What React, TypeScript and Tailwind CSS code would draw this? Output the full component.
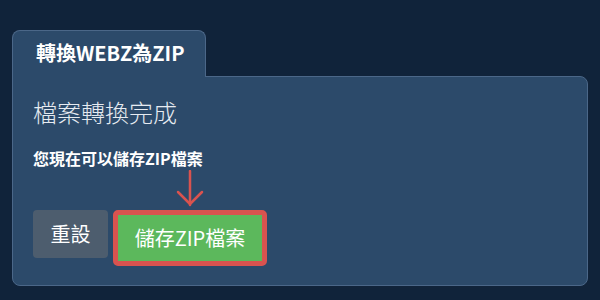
export default function App() {
  return (
    <div
      className="min-h-[300px] w-full bg-[#10233a] pl-[12px] pr-[12px] pt-[30px] text-white"
      style={{ fontFamily: '"Noto Sans CJK TC", "Noto Sans", sans-serif' }}
    >
      <div className="flex">
        <div className="relative z-10 -mb-px h-[47px] w-[194px] rounded-t-lg border border-b-0 border-[#4b6788] bg-[#2c4a6a] pl-[23px] pt-[8px]">
          <span className="text-[20px] font-bold leading-[28px]">轉換WEBZ為ZIP</span>
        </div>
      </div>
      <div className="rounded-b-lg rounded-tr-lg border border-[#4b6788] bg-[#2c4a6a] px-[20px] pb-[19px] pt-[19px]">
        <h2 className="text-[24px] font-light leading-[32px] text-[#e6ebf1]">檔案轉換完成</h2>
        <p className="mt-[18px] text-[16px] font-bold leading-[24px]">您現在可以儲存ZIP檔案</p>
        <div className="mt-[40px] flex items-start gap-[5px]">
          <button className="h-[48px] w-[75px] rounded-[4px] bg-[#4d5d6e] text-[20px] leading-[28px] text-white">
            重設
          </button>
          <div className="relative">
            <svg
              className="absolute bottom-[calc(100%+3px)] left-1/2 -translate-x-1/2"
              width="28"
              height="37"
              viewBox="0 0 28 37"
              fill="none"
              stroke="#d9534f"
              strokeWidth="2.5"
              strokeLinecap="round"
            >
              <line x1="14" y1="1" x2="14" y2="35" />
              <polyline points="2,22 14,34 26,22" strokeLinejoin="round" />
            </svg>
            <button className="h-[56px] w-[154px] rounded-[5px] border-[5px] border-[#d9534f] bg-[#5cb85c] text-[20px] leading-[28px] text-white">
              儲存ZIP檔案
            </button>
          </div>
        </div>
      </div>
    </div>
  );
}
